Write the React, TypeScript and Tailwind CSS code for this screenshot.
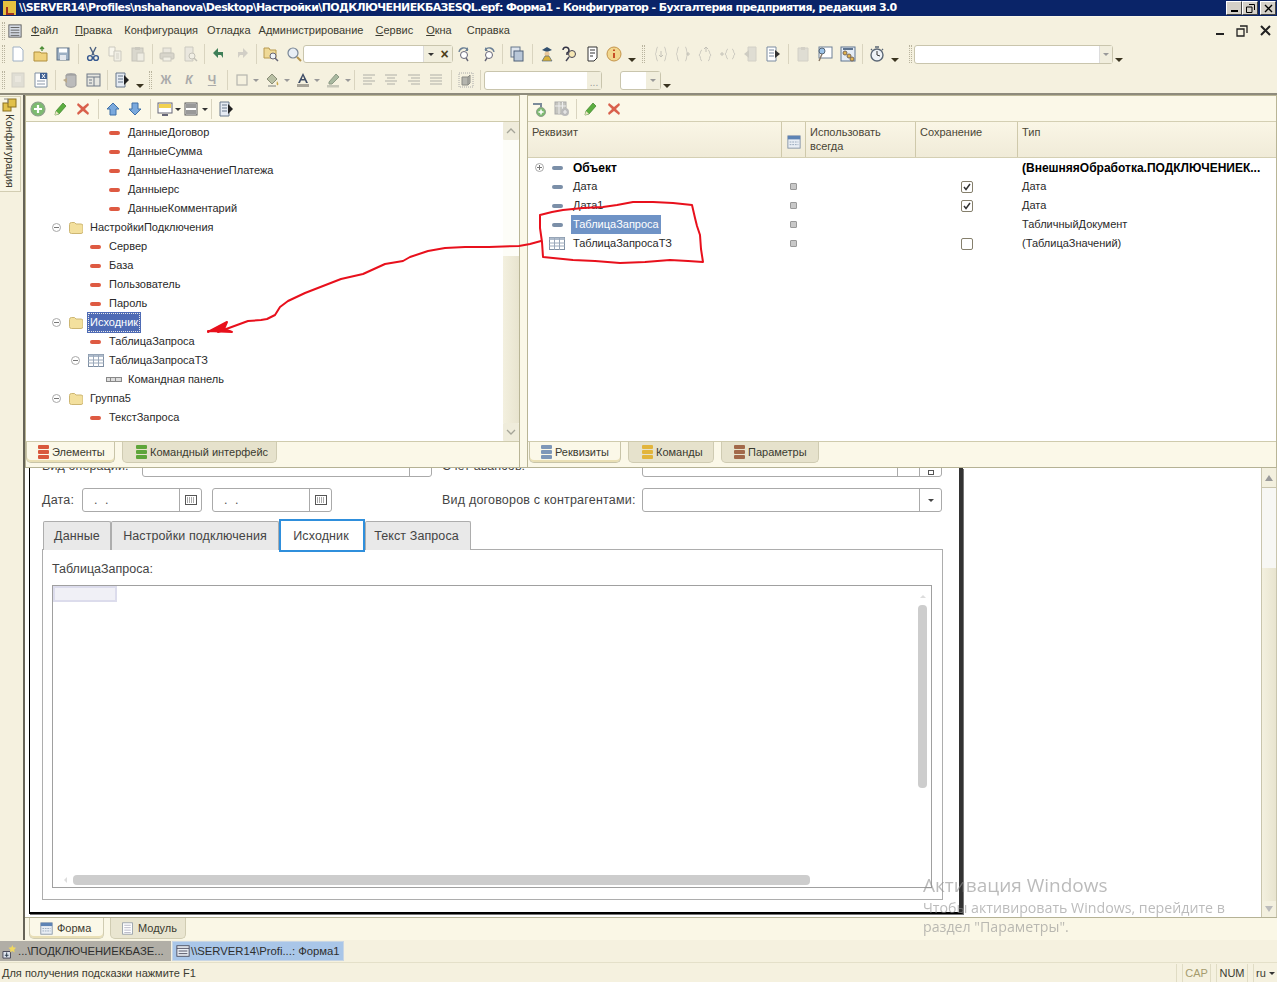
import type { ReactNode } from "react";

// small 16x16 drawings for the toolbars
function Ico({ children, dim, size = 16 }: { children: ReactNode; dim?: boolean; size?: number }) {
  return (
    <svg width={size} height={size} viewBox="0 0 16 16" className={dim ? "opacity-45 grayscale" : ""}>
      {children}
    </svg>
  );
}

const icons: Record<string, ReactNode> = {
  doc: <path d="M3 1h7l3 3v11H3z" fill="#fff" stroke="#9fb0c4" />,
  open: <><path d="M1 6h6l1 1h6v8H1z" fill="#efd27e" stroke="#b08f3e" /><path d="M9 5V2M7 3l2-2 2 2" fill="none" stroke="#4f8f3a" strokeWidth="1.3" /></>,
  save: <><rect x="2" y="2" width="12" height="12" fill="#9db0c4" stroke="#5f7186" /><rect x="4" y="2.5" width="8" height="4" fill="#fff" /><rect x="5" y="9" width="6" height="5" fill="#e4e8ee" /></>,
  cut: <><path d="M5 1l4 8M11 1L7 9" stroke="#4a5f80" strokeWidth="1.4" fill="none" /><circle cx="5" cy="12" r="2.4" fill="none" stroke="#34578f" strokeWidth="1.4" /><circle cx="11" cy="12" r="2.4" fill="none" stroke="#34578f" strokeWidth="1.4" /></>,
  copy: <><path d="M2 1h6v9H2z" fill="#fff" stroke="#999" /><path d="M7 5h7v10H7z" fill="#eee" stroke="#999" /><path d="M9 8h3M9 10h3M9 12h3" stroke="#aaa" /></>,
  paste: <><rect x="2" y="2" width="11" height="13" fill="#b9b9b0" stroke="#8d8d86" /><rect x="5" y="1" width="5" height="3" fill="#999" /><rect x="7" y="7" width="7" height="8" fill="#e9e9e9" stroke="#999" /></>,
  print: <><rect x="4" y="2" width="8" height="5" fill="#ddd" stroke="#999" /><rect x="1" y="7" width="14" height="6" rx="1" fill="#b5b5b0" stroke="#8d8d86" /><rect x="4" y="11" width="8" height="4" fill="#eee" stroke="#999" /></>,
  preview: <><path d="M3 1h8v14H3z" fill="#ddd" stroke="#999" /><circle cx="10" cy="10" r="3" fill="#eee" stroke="#888" /><path d="M12 12l3 3" stroke="#888" strokeWidth="1.5" /></>,
  undo: <path d="M7 2L2 7l5 5V9h3l2 3V6H7z" fill="#3f7f58" />,
  redo: <path d="M9 2l5 5-5 5V9H6l-2 3V6h5z" fill="#8fb09c" />,
  folderfind: <><path d="M1 2h5l1 2h6v8H1z" fill="#efd996" stroke="#b89a50" /><circle cx="10" cy="10" r="3" fill="#eef3f8" stroke="#667" /><path d="M12 12l3 3" stroke="#667" strokeWidth="1.5" /></>,
  search: <><circle cx="7" cy="7" r="5" fill="#e8eef5" stroke="#7a8797" strokeWidth="1.2" /><path d="M11 11l4 4" stroke="#b59550" strokeWidth="2" /></>,
  findn: <><path d="M2 6a5 5 0 0 1 9-2" fill="none" stroke="#6a7f95" strokeWidth="1.3" /><path d="M11 1v4H8" fill="#6a7f95" /><circle cx="7" cy="9" r="3.5" fill="#fff" stroke="#667" /><path d="M9 12l2 3" stroke="#667" strokeWidth="1.4" /></>,
  findp: <><path d="M14 6a5 5 0 0 0-9-2" fill="none" stroke="#6a7f95" strokeWidth="1.3" /><path d="M5 1v4h3" fill="#6a7f95" /><circle cx="9" cy="9" r="3.5" fill="#fff" stroke="#667" /><path d="M7 12l-2 3" stroke="#667" strokeWidth="1.4" /></>,
  windows: <><rect x="2" y="1" width="9" height="10" fill="#dfe5ec" stroke="#68788c" /><rect x="5" y="5" width="9" height="10" fill="#b9c7d8" stroke="#4f6078" /></>,
  wizard: <><path d="M3 4l5-3 5 3-5 2z" fill="#32506f" /><circle cx="8" cy="8" r="2.5" fill="#e9c89a" /><path d="M3 15l3-5h4l3 5z" fill="#d9b13a" stroke="#3e5a80" strokeWidth=".6" /></>,
  helpfind: <><path d="M2 4a3 3 0 1 1 4 3v2" fill="none" stroke="#334" strokeWidth="1.5" /><circle cx="11" cy="8" r="3.5" fill="#f6e7b4" stroke="#445" /><path d="M8 11l-3 4" stroke="#445" strokeWidth="1.4" /></>,
  notes: <><path d="M4 1h9v11l-3 3H4z" fill="#fff" stroke="#333" /><path d="M6 4h5M6 7h5M6 10h3" stroke="#333" /></>,
  info: <><circle cx="8" cy="8" r="7" fill="#f1d68d" stroke="#c4944a" /><path d="M8 3.5v1.5M8 7v5" stroke="#c2411c" strokeWidth="1.8" /></>,
  br1: <><path d="M5 1C3 1 4 7 2 8c2 1 1 7 3 7M11 1c2 0 1 6 3 7-2 1-1 7-3 7" fill="none" stroke="#999" /><path d="M8 5v6M6 9l2 2 2-2" fill="none" stroke="#888" /></>,
  br2: <><path d="M4 1C2 1 3 7 1 8c2 1 1 7 3 7M10 1c2 0 1 6 3 7-2 1-1 7-3 7" fill="none" stroke="#999" /><path d="M11 8h4M13 6v4" stroke="#888" /></>,
  br3: <><path d="M4 4C2 4 3 8 1 9c2 1 1 6 3 6M10 4c2 0 1 4 3 5-2 1-1 6-3 6" fill="none" stroke="#999" /><path d="M8 1v5M6 3l2-2 2 2" fill="none" stroke="#888" /></>,
  br4: <><path d="M8 3C6 3 7 7 5 8c2 1 1 5 3 5M12 3c2 0 1 4 3 5-2 1-1 5-3 5" fill="none" stroke="#999" /><path d="M0 8h4M2 6v4" stroke="#888" /></>,
  moveout: <><path d="M5 1h8v14H5z" fill="#c5c5bf" stroke="#aaa" /><path d="M1 8l5-4v8z" fill="#b39f75" /></>,
  docnext: <><path d="M2 1h9v14H2z" fill="#fff" stroke="#7b8ba0" /><path d="M4 4h5M4 7h5M4 10h5" stroke="#7b8ba0" /><path d="M10 4l5 4-5 4z" fill="#333" /></>,
  page: <><path d="M3 2h10v13H3z" fill="#c5c5bf" stroke="#aaa" /><path d="M6 1h4v3H6z" fill="#aaa" /></>,
  picfind: <><rect x="2" y="1" width="13" height="11" fill="#fff" stroke="#6e8096" /><circle cx="5" cy="5" r="3" fill="#9cc3e8" stroke="#567" /><path d="M2 15l3-7" stroke="#876" strokeWidth="1.4" /></>,
  chain: <><rect x="1" y="1" width="14" height="14" fill="#e6edf5" stroke="#5f7590" /><path d="M3 3h10" stroke="#5f7590" strokeWidth="2" /><circle cx="5" cy="7" r="2" fill="#e1b24b" stroke="#765" /><circle cx="9" cy="10" r="2" fill="#e1b24b" stroke="#765" /><circle cx="12" cy="13" r="2" fill="#e1b24b" stroke="#765" /></>,
  clock: <><circle cx="8" cy="9" r="6" fill="#eef2f6" stroke="#5b6775" strokeWidth="1.4" /><path d="M8 5v4l3 1" fill="none" stroke="#333" /><path d="M6 1h4M3 3l-1 1M13 3l1 1" stroke="#5b6775" strokeWidth="1.4" /></>,
  modgrey: <><rect x="2" y="1" width="12" height="14" fill="#c9c9c2" stroke="#aaa" /><rect x="5" y="4" width="6" height="6" fill="#ddd" /></>,
  formx: <><path d="M2 1h12v14H2z" fill="#fff" stroke="#7f8fa3" /><rect x="7" y="1" width="7" height="6" fill="#3e5f93" /><path d="M9 2l3 4M12 2L9 6" stroke="#fff" /><path d="M4 9h8M4 12h8" stroke="#8a97a8" /></>,
  cyl: <><ellipse cx="9" cy="3" rx="5" ry="2" fill="#aaa" /><path d="M4 3v10c0 3 10 3 10 0V3z" fill="#bbb" stroke="#999" /><path d="M1 8l4-2v5z" fill="#b9a98b" /></>,
  formview: <><rect x="2" y="2" width="13" height="12" fill="#e6e6e0" stroke="#707a88" /><path d="M2 5h13M9 5v9" stroke="#707a88" /><path d="M4 8h3M4 11h3" stroke="#707a88" /></>,
  docarrow: <><path d="M2 1h9v14H2z" fill="#e5ebf3" stroke="#68788c" /><path d="M4 4h5M4 7h5M4 10h5" stroke="#68788c" /><path d="M10 3l5 5-5 5z" fill="#222" /></>,
  border: <rect x="3" y="3" width="10" height="10" fill="none" stroke="#b5b5ae" strokeWidth="1.2" />,
  fill: <><path d="M3 7l5-5 5 5-5 5z" fill="#b9c0a4" stroke="#8a8e78" /><path d="M13 9c1 2 2 3 1 4s-2-1-1-4z" fill="#c9a94e" /><rect x="4" y="13" width="8" height="2" fill="#b8b8ae" /></>,
  fontA: <><path d="M8 1L3 11h2l1-2.5h4L11 11h2zM6.8 7L8 4l1.2 3z" fill="#3e4c66" /><rect x="2" y="12" width="12" height="3" fill="#a8a498" /></>,
  pen: <><path d="M4 10l7-8 3 3-7 7H4z" fill="#a9b9a0" stroke="#8d9a85" /><rect x="2" y="13" width="12" height="2.5" fill="#c7c7b8" /></>,
  al1: <path d="M2 3h12M2 6h9M2 9h12M2 12h9" stroke="#b0b0a8" strokeWidth="1.2" />,
  al2: <path d="M2 3h12M4 6h8M2 9h12M4 12h8" stroke="#b0b0a8" strokeWidth="1.2" />,
  al3: <path d="M2 3h12M5 6h9M2 9h12M5 12h9" stroke="#b0b0a8" strokeWidth="1.2" />,
  al4: <path d="M2 3h12M2 6h12M2 9h12M2 12h12" stroke="#b0b0a8" strokeWidth="1.2" />,
  box3d: <><rect x="1" y="1" width="14" height="14" fill="none" stroke="#aaa" strokeDasharray="1 1" /><path d="M4 5h6v8H4zM10 5l2-2v8l-2 2" fill="#b5b5ae" stroke="#8a8a84" /></>,
  plus: <><circle cx="8" cy="8" r="7" fill="#7dbb70" stroke="#8f9f8c" strokeWidth="1.2" /><path d="M8 4v8M4 8h8" stroke="#fff" strokeWidth="2.2" /></>,
  pencil: <><path d="M2 14l1-4 7-8 3 3-7 8z" fill="#5cae3f" stroke="#3c7f2a" strokeWidth=".7" /><path d="M2 14l1-4 3 3z" fill="#f0e6c8" /></>,
  del: <path d="M3 2l5 4 5-4 1 2-4 4 4 4-1 2-5-4-5 4-1-2 4-4-4-4z" fill="#d9604c" />,
  up: <path d="M8 2l6 6h-3v6H5V8H2z" fill="#7aa9dd" stroke="#3f70a8" />,
  down: <path d="M8 14l6-6h-3V2H5v6H2z" fill="#7aa9dd" stroke="#3f70a8" />,
  display: <><rect x="1" y="2" width="14" height="10" fill="#fff" stroke="#667" /><rect x="2" y="3" width="12" height="4" fill="#f2d24f" /><path d="M5 14h6" stroke="#667" strokeWidth="2" /></>,
  split: <><rect x="2" y="2" width="12" height="12" fill="#fff" stroke="#555" /><rect x="3" y="3" width="10" height="4" fill="#999" /><rect x="3" y="9" width="10" height="4" fill="#999" /></>,
  addattr: <><path d="M2 3h8v3" fill="none" stroke="#7b8b9a" strokeWidth="2" /><circle cx="10" cy="11" r="4.5" fill="#7dbb70" stroke="#8f9f8c" /><path d="M10 8.500v5M7.500 11h5" stroke="#fff" strokeWidth="1.5" /></>,
  addtable: <><rect x="1" y="1" width="11" height="12" fill="#c6c6c0" stroke="#aaa" /><path d="M1 5h11M5 1v12M8.500 1v12" stroke="#eee" /><circle cx="11" cy="11" r="4" fill="#bbb" /><path d="M11 9v4M9 11h4" stroke="#eee" strokeWidth="1.2" /></>,
};

function Btn({ name, dim }: { name: string; dim?: boolean }) {
  return (
    <div className="flex h-full w-[22.5px] shrink-0 items-center justify-center">
      <Ico dim={dim}>{icons[name]}</Ico>
    </div>
  );
}

function Sep() {
  return <div className="mx-[3px] h-[20px] w-px shrink-0 bg-[#d9d4bf]" />;
}

function Grip() {
  return <div className="ml-[2px] h-[18px] w-[3px] shrink-0 border-x border-dotted border-[#b9b49e]" />;
}

function Arrow({ dark }: { dark?: boolean }) {
  return (
    <div className={`h-0 w-0 shrink-0 border-x-[3px] border-t-[3px] border-x-transparent ${dark ? "border-t-[#333]" : "border-t-[#999]"}`} />
  );
}

function Overflow() {
  return <div className="mt-[12px] ml-[2px] h-0 w-0 shrink-0 border-x-[4px] border-t-[4px] border-x-transparent border-t-[#3a3420]" />;
}

function Bars({ color }: { color: "red" | "green" | "blue" | "yellow" | "brown" }) {
  const fill = { red: "bg-[#d9583c]", green: "bg-[#5ea53a]", blue: "bg-[#7e97b8]", yellow: "bg-[#e2b53c]", brown: "bg-[#a2694a]" }[color];
  return (
    <div className="flex w-[11px] shrink-0 flex-col gap-px">
      <div className={`h-[4px] rounded-[1px] ${fill}`} />
      <div className={`h-[4px] rounded-[1px] ${fill}`} />
      <div className={`h-[4px] rounded-[1px] ${fill}`} />
    </div>
  );
}

function Dash({ blue }: { blue?: boolean }) {
  return <div className={`h-[4px] w-[11px] rounded-[2px] ${blue ? "bg-[#7b8fa8]" : "bg-[#de5a42]"}`} />;
}

function Folder() {
  return (
    <svg width="14" height="12" viewBox="0 0 14 12">
      <path d="M.5 2.500q0-2 2-2h3l1.500 1.500h5q2 0 2 2v5.500q0 2-2 2h-9.500q-2 0-2-2z" fill="#f3e09e" stroke="#cdb672" />
    </svg>
  );
}

function TableIcon() {
  return (
    <svg width="16" height="13" viewBox="0 0 16 13">
      <rect x=".5" y=".5" width="15" height="12" fill="#fff" stroke="#7f8fa3" />
      <rect x=".5" y=".5" width="15" height="2.500" fill="#aebbcb" />
      <path d="M5.500 0v13M10.500 0v13M0 6h16M0 9h16" stroke="#9aa8ba" />
    </svg>
  );
}

function Expander({ plus }: { plus?: boolean }) {
  return (
    <div className="relative h-[9px] w-[9px] rounded-full border border-[#a9a9a9] bg-white">
      <div className="absolute top-[3px] left-[1px] h-px w-[5px] bg-[#777]" />
      {plus && <div className="absolute top-[1px] left-[3px] h-[5px] w-px bg-[#777]" />}
    </div>
  );
}

function TreeRow({ pad, exp, icon, box, label, sel }: { pad: string; exp?: boolean; icon: ReactNode; box: string; label: string; sel?: boolean }) {
  return (
    <div className={`flex h-[19px] items-center ${pad}`}>
      {exp && (
        <div className="w-[17px] shrink-0">
          <Expander />
        </div>
      )}
      <div className={`shrink-0 ${box}`}>{icon}</div>
      <span className={sel ? "-ml-[2px] border border-dotted border-[#e8e8e8] bg-[#4e6bb5] px-px text-white outline outline-[#4e6bb5]" : ""}>{label}</span>
    </div>
  );
}

function LeftTree() {
  return (
    <div className="flex-1 pt-px text-[11px] text-[#2a2a2a]">
      <TreeRow pad="pl-[83px]" icon={<Dash />} box="w-[19px]" label="ДанныеДоговор" />
      <TreeRow pad="pl-[83px]" icon={<Dash />} box="w-[19px]" label="ДанныеСумма" />
      <TreeRow pad="pl-[83px]" icon={<Dash />} box="w-[19px]" label="ДанныеНазначениеПлатежа" />
      <TreeRow pad="pl-[83px]" icon={<Dash />} box="w-[19px]" label="Данныерс" />
      <TreeRow pad="pl-[83px]" icon={<Dash />} box="w-[19px]" label="ДанныеКомментарий" />
      <TreeRow pad="pl-[26px]" exp icon={<Folder />} box="w-[21px]" label="НастройкиПодключения" />
      <TreeRow pad="pl-[64px]" icon={<Dash />} box="w-[19px]" label="Сервер" />
      <TreeRow pad="pl-[64px]" icon={<Dash />} box="w-[19px]" label="База" />
      <TreeRow pad="pl-[64px]" icon={<Dash />} box="w-[19px]" label="Пользователь" />
      <TreeRow pad="pl-[64px]" icon={<Dash />} box="w-[19px]" label="Пароль" />
      <TreeRow pad="pl-[26px]" exp icon={<Folder />} box="w-[21px]" label="Исходник" sel />
      <TreeRow pad="pl-[64px]" icon={<Dash />} box="w-[19px]" label="ТаблицаЗапроса" />
      <TreeRow pad="pl-[45px]" exp icon={<TableIcon />} box="w-[21px]" label="ТаблицаЗапросаТЗ" />
      <TreeRow
        pad="pl-[80px]"
        icon={
          <div className="flex h-[5px] w-[16px] gap-px border border-[#888] bg-[#ddd]">
            <div className="w-[4px] border-r border-[#888]" />
            <div className="w-[4px] border-r border-[#888]" />
          </div>
        }
        box="w-[22px]"
        label="Командная панель"
      />
      <TreeRow pad="pl-[26px]" exp icon={<Folder />} box="w-[21px]" label="Группа5" />
      <TreeRow pad="pl-[64px]" icon={<Dash />} box="w-[19px]" label="ТекстЗапроса" />
    </div>
  );
}

function PanelTab({ active, color, label, w, pad }: { active?: boolean; color: "red" | "green" | "blue" | "yellow" | "brown"; label: string; w: string; pad: string }) {
  return (
    <div
      className={`flex h-[21px] items-center gap-[3px] rounded-b-[5px] border border-t-0 text-[11px] text-[#3a3a30] ${w} ${pad} ${
        active ? "border-[#c8c4a8] bg-[#fbf8e8] shadow-[inset_0_-2px_0_#e9dfb5]" : "border-[#cfcbb2] bg-[#e6e2cc]"
      }`}
    >
      <Bars color={color} />
      <span className="whitespace-nowrap">{label}</span>
    </div>
  );
}

function ScrollLeft() {
  return (
    <div className="flex w-[16px] shrink-0 flex-col">
      <div className="flex h-[18px] items-center justify-center rounded-[1px] bg-[#efecdb] text-[#aaa]">
        <svg width="10" height="6" viewBox="0 0 10 6"><path d="M1 5l4-4 4 4" fill="none" stroke="#a5a598" strokeWidth="1.3" /></svg>
      </div>
      <div className="h-[116px] bg-[#fdfdf8]" />
      <div className="flex-1 bg-gradient-to-r from-[#f3f0df] to-[#e8e4cf]" />
      <div className="flex h-[18px] items-center justify-center rounded-[1px] bg-[#efecdb]">
        <svg width="10" height="6" viewBox="0 0 10 6"><path d="M1 1l4 4 4-4" fill="none" stroke="#a5a598" strokeWidth="1.3" /></svg>
      </div>
    </div>
  );
}

function Square() {
  return <div className="h-[7px] w-[7px] rounded-[1px] border border-[#999] bg-[#c8c8c8]" />;
}

function Check({ on }: { on?: boolean }) {
  return (
    <div className="flex h-[12px] w-[12px] items-center justify-center rounded-[2px] border border-[#857f6c] bg-white">
      {on && (
        <svg width="8" height="8" viewBox="0 0 8 8"><path d="M1 4l2 2.500L7 1" fill="none" stroke="#333" strokeWidth="1.5" /></svg>
      )}
    </div>
  );
}

function AttrRow({ name, icon, exp, bold, sel, save, type }: { name: string; icon: ReactNode; exp?: boolean; bold?: boolean; sel?: boolean; save?: "on" | "off"; type: string }) {
  return (
    <div className="grid h-[19px] grid-cols-[253px_24px_110px_102px_1fr] items-center">
      <div className="flex items-center pl-[7px]">
        <div className="flex w-[17px] shrink-0 items-center">{exp && <Expander plus />}</div>
        <div className="flex w-[21px] shrink-0 items-center">{icon}</div>
        <span className={`${bold ? "text-[12px] font-bold text-black" : ""} ${sel ? "-ml-[2px] bg-[#6f93c6] px-[2px] leading-[19px] text-white" : ""}`}>{name}</span>
      </div>
      <div className="flex justify-center">{!bold && <Square />}</div>
      <div />
      <div className="flex justify-center pl-[2px]">{save && <Check on={save === "on"} />}</div>
      <div className={`whitespace-nowrap pl-[5px] ${bold ? "text-[12px] font-bold text-black" : ""}`}>{type}</div>
    </div>
  );
}

function HeadCell({ children, border }: { children: ReactNode; border?: boolean }) {
  return (
    <div className={`h-full px-[4px] pt-[3px] leading-[14px] ${border ? "border-l border-[#cfc9ab]" : ""}`}>{children}</div>
  );
}

function FieldBtn({ children }: { children: ReactNode }) {
  return <div className="flex h-full w-[22px] shrink-0 items-center justify-center border-l border-[#aaa]">{children}</div>;
}

function Cal() {
  return (
    <svg width="12" height="10" viewBox="0 0 12 10">
      <rect x=".5" y=".5" width="11" height="9" fill="#fff" stroke="#555" />
      <path d="M2 3h8M2 5h8M2 7h8" stroke="#555" strokeDasharray="1 1" />
    </svg>
  );
}

function DownTri() {
  return <div className="h-0 w-0 border-x-[3px] border-t-[3px] border-x-transparent border-t-[#444]" />;
}

function FormTab({ label, w, active }: { label: string; w: string; active?: boolean }) {
  if (active) {
    return (
      <div className={`z-10 -my-[2px] flex h-[33px] items-center justify-center border-2 border-[#2f8fdc] bg-white pt-px pr-[2px] text-[12.5px] ${w}`}>
        {label}
      </div>
    );
  }
  return (
    <div className={`flex h-[29px] items-center justify-center rounded-t-[2px] border border-b-0 border-[#adadad] bg-[#e9e9e9] text-[12.5px] ${w}`}>
      {label}
    </div>
  );
}

function Form() {
  return (
    <div className="ml-[4px] h-[446px] w-[934px] overflow-hidden border-r-[4px] border-b-[2px] border-l border-r-[#333] border-b-black border-l-black bg-white pl-[12px] font-['Liberation_Sans',sans-serif] text-[#444] shadow-[1px_1px_0_#777]">
      {/* the row cut off by the upper panel */}
      <div className="h-[9px] overflow-hidden">
        <div className="-mt-[13px] flex h-[22px] text-[12.5px] tracking-[0.1px]">
          <span className="w-[100px] leading-[22px]">Вид операции:</span>
          <div className="flex h-[22px] w-[290px] justify-end rounded-[3px] border border-[#aaa]">
            <FieldBtn>{null}</FieldBtn>
          </div>
          <span className="ml-[10px] w-[200px] leading-[22px]">Счет авансов:</span>
          <div className="flex h-[22px] w-[300px] justify-end rounded-[3px] border border-[#aaa]">
            <FieldBtn>{null}</FieldBtn>
            <FieldBtn><div className="mt-[12px] h-[5px] w-[6px] border border-[#555]" /></FieldBtn>
          </div>
        </div>
      </div>
      <div className="mt-[11px] flex h-[24px] items-center text-[12.5px] tracking-[0.2px]">
        <span className="w-[40px]">Дата:</span>
        <div className="flex h-[24px] w-[120px] items-center justify-between rounded-[3px] border border-[#aaa]">
          <span className="pl-[11px] text-[#555]">.&nbsp;&nbsp;.</span>
          <FieldBtn><Cal /></FieldBtn>
        </div>
        <div className="ml-[10px] flex h-[24px] w-[120px] items-center justify-between rounded-[3px] border border-[#aaa]">
          <span className="pl-[11px] text-[#555]">.&nbsp;&nbsp;.</span>
          <FieldBtn><Cal /></FieldBtn>
        </div>
        <span className="ml-[110px] w-[200px] whitespace-nowrap">Вид договоров с контрагентами:</span>
        <div className="flex h-[24px] w-[300px] items-center justify-end rounded-[3px] border border-[#aaa]">
          <FieldBtn><DownTri /></FieldBtn>
        </div>
      </div>
      <div className="mt-[9px] flex h-[29px] w-[900px] items-start pl-px tracking-[0.1px]">
        <FormTab label="Данные" w="w-[68px]" />
        <FormTab label="Настройки подключения" w="w-[168px]" />
        <FormTab label="Исходник" w="w-[86px]" active />
        <div className="flex h-[29px] w-[106px] items-center justify-center rounded-t-[2px] border border-b-0 border-[#adadad] bg-[#e9e9e9] pr-[3px] text-[12.5px]">Текст Запроса</div>
      </div>
      <div className="-mt-px h-[351px] w-[901px] border border-[#adadad] px-[9px] pt-[12px]">
        <div className="text-[12.5px] leading-[15px]">ТаблицаЗапроса:</div>
        <div className="mt-[8px] flex h-[303px] w-[880px] flex-col border border-[#a0a0a0]">
          <div className="flex min-h-0 flex-1">
            <div className="flex-1">
              <div className="h-[16px] w-[64px] border-2 border-[#dcdcec] bg-[#f0f0f6]" />
            </div>
            <div className="flex w-[14px] flex-col items-center pt-[9px] pr-[3px]">
              <div className="h-0 w-0 border-x-[3px] border-b-[3px] border-x-transparent border-b-[#ddd]" />
              <div className="mt-[7px] h-[183px] w-[9px] rounded-[4px] bg-[#cdcdcd]" />
            </div>
          </div>
          <div className="flex h-[14px] items-center pl-[11px]">
            <div className="mr-[6px] h-0 w-0 border-y-[3px] border-r-[3px] border-y-transparent border-r-[#ddd]" />
            <div className="h-[10px] w-[737px] rounded-[4px] bg-[#cdcdcd]" />
          </div>
        </div>
      </div>
    </div>
  );
}

const menu = [
  { u: "Ф", t: "айл", m: "ml-[15px]" },
  { u: "П", t: "равка", m: "ml-[17px]" },
  { u: "", t: "Конфигурация", m: "ml-[12px]" },
  { u: "", t: "Отладка", m: "ml-[9px]" },
  { u: "", t: "Администрирование", m: "ml-[8px]" },
  { u: "С", t: "ервис", m: "ml-[12px]" },
  { u: "О", t: "кна", m: "ml-[13px]" },
  { u: "", t: "Справка", m: "ml-[15px]" },
];

function WinBtn({ children }: { children: ReactNode }) {
  return (
    <div className="flex h-[14px] w-[16px] items-center justify-center border border-t-white border-r-[#444] border-b-[#444] border-l-white bg-[#d4d0c8] text-black">
      {children}
    </div>
  );
}

export default function App() {
  return (
    <div className="relative flex h-[982px] w-[1277px] flex-col overflow-hidden bg-[#f5f1df] font-['Liberation_Sans',sans-serif] text-[11px] text-[#3b3b30]">
      {/* title */}
      <div className="flex h-[16px] shrink-0 items-center bg-[#0a2468] text-white">
        <div className="ml-[3px] mr-[3px] flex h-[14px] w-[13px] items-end justify-center bg-[#e5c040]">
          <div className="h-[8px] w-[8px] border-b-2 border-l-2 border-[#a0301f]" />
        </div>
        <span className="pt-px font-['DejaVu_Sans',sans-serif] text-[11px] font-bold tracking-[-0.62px] whitespace-nowrap">
          \\SERVER14\Profiles\nshahanova\Desktop\Настройки\ПОДКЛЮЧЕНИЕКБАЗЕSQL.epf: Форма1 - Конфигуратор - Бухгалтерия предприятия, редакция 3.0
        </span>
        <div className="ml-auto flex">
          <WinBtn><div className="mt-[6px] h-[2px] w-[7px] bg-black" /></WinBtn>
          <WinBtn><svg width="9" height="9" viewBox="0 0 9 9"><path d="M3 .5h5.500V6M.5 3h5.500v5.500H.5z" fill="none" stroke="#000" /></svg></WinBtn>
          <div className="w-[2px]" />
          <WinBtn><svg width="9" height="9" viewBox="0 0 9 9"><path d="M1 1l7 7M8 1L1 8" stroke="#000" strokeWidth="1.4" /></svg></WinBtn>
          <div className="w-px" />
        </div>
      </div>

      {/* menu */}
      <div className="flex h-[25px] shrink-0 items-center border-t border-[#fbf8ea] pt-[3px]">
        <Grip />
        <div className="ml-[3px] mr-[-6px] w-[14px]">
          <Ico size={14}><rect x="1" y="1" width="14" height="14" fill="#d5dbe5" stroke="#555" /><path d="M3 4h10M3 7h10M3 10h10M3 13h10" stroke="#555" /></Ico>
        </div>
        {menu.map((item) => (
          <span key={item.t} className={`${item.m} whitespace-nowrap`}>
            <span className="underline">{item.u}</span>
            {item.t}
          </span>
        ))}
        <div className="ml-auto mr-[6px] flex items-center gap-[12px] text-[#222]">
          <div className="mt-[7px] h-[2px] w-[8px] bg-[#222]" />
          <svg width="12" height="12" viewBox="0 0 12 12"><path d="M4 1h7v7M1 4h7v7H1z" fill="none" stroke="#222" strokeWidth="1.3" /></svg>
          <svg width="11" height="11" viewBox="0 0 11 11"><path d="M1 1l9 9M10 1l-9 9" stroke="#222" strokeWidth="2" /></svg>
        </div>
      </div>

      {/* toolbar 1 */}
      <div className="flex h-[26px] shrink-0 items-center">
        <Grip />
        <div className="w-[2px] shrink-0" />
        <Btn name="doc" /><Btn name="open" /><Btn name="save" /><Sep />
        <Btn name="cut" /><Btn name="copy" dim /><Btn name="paste" dim /><Sep />
        <Btn name="print" dim /><Btn name="preview" dim /><Sep />
        <Btn name="undo" /><Btn name="redo" dim /><Sep />
        <Btn name="folderfind" /><Btn name="search" />
        <div className="-ml-[2px] flex h-[18px] w-[150px] shrink-0 items-center rounded-[3px] border border-[#c9c5ad] bg-white">
          <div className="ml-auto flex h-full w-[14px] items-center justify-center border-l border-[#ddd] bg-[#f1eedd]"><Arrow dark /></div>
          <div className="flex h-full w-[15px] items-center justify-center bg-[#f1eedd] text-[14px] font-bold leading-none text-[#4a3d1a]">×</div>
        </div>
        <div className="w-[1px] shrink-0" />
        <Btn name="findn" /><Btn name="findp" /><Sep />
        <Btn name="windows" /><Sep />
        <Btn name="wizard" /><Btn name="helpfind" /><Btn name="notes" /><Btn name="info" />
        <Overflow />
        <div className="w-[4px] shrink-0" />
        <Grip />
        <div className="w-[5px] shrink-0" />
        <Btn name="br1" dim /><Btn name="br2" dim /><Btn name="br3" dim /><Btn name="br4" dim /><Btn name="moveout" dim /><Btn name="docnext" /><Sep />
        <Btn name="page" dim /><Btn name="picfind" /><Btn name="chain" /><Sep />
        <Btn name="clock" />
        <Overflow />
        <div className="w-[8px] shrink-0" />
        <Grip />
        <div className="ml-[2px] flex h-[19px] w-[199px] shrink-0 items-center justify-end rounded-[3px] border border-[#c9c5ad] bg-white">
          <div className="flex h-full w-[13px] items-center justify-center border-l border-[#ddd] bg-[#f1eedd]"><Arrow /></div>
        </div>
        <Overflow />
      </div>

      {/* toolbar 2 */}
      <div className="flex h-[26px] shrink-0 items-center">
        <Grip />
        <div className="w-[2px] shrink-0" />
        <Btn name="modgrey" dim /><Btn name="formx" /><Sep />
        <Btn name="cyl" /><Btn name="formview" /><Sep />
        <Btn name="docarrow" />
        <Overflow />
        <div className="w-[3px] shrink-0" />
        <Grip />
        <div className="w-[3px] shrink-0" />
        {["Ж", "К", "Ч"].map((l, i) => (
          <div key={l} className={`flex w-[23px] shrink-0 justify-center text-[12px] font-bold text-[#aaa] ${i === 1 ? "italic" : ""} ${i === 2 ? "underline" : ""}`}>
            {l}
          </div>
        ))}
        <Sep />
        <Btn name="border" /><Arrow /><div className="w-[2px] shrink-0" />
        <Btn name="fill" /><Arrow /><div className="w-[2px] shrink-0" />
        <Btn name="fontA" /><Arrow /><div className="w-[2px] shrink-0" />
        <Btn name="pen" /><Arrow />
        <Sep />
        <Btn name="al1" /><Btn name="al2" /><Btn name="al3" /><Btn name="al4" /><Sep />
        <Btn name="box3d" /><Sep />
        <div className="flex h-[19px] w-[118px] shrink-0 items-center justify-end rounded-[3px] border border-[#c9c5ad] bg-white">
          <div className="flex h-full w-[14px] items-end justify-center bg-[#f1eedd] text-[10px] leading-[13px] text-[#999]">...</div>
        </div>
        <div className="ml-[18px] flex h-[19px] w-[41px] shrink-0 items-center justify-end rounded-[3px] border border-[#c9c5ad] bg-white">
          <div className="flex h-full w-[14px] items-center justify-center bg-[#f1eedd]"><Arrow /></div>
        </div>
        <Overflow />
      </div>

      <div className="h-[2px] shrink-0 bg-[#8e8b7c]" />

      {/* main */}
      <div className="flex min-h-0 flex-1">
        <div className="w-[23px] shrink-0 pt-[1px]">
          <div className="flex h-[96px] w-[21px] flex-col items-center border border-l-0 border-[#d2cdb2] bg-[#f8f5e4]">
            <Ico size={16}><rect x="1" y="6" width="8" height="8" fill="#e2c14a" stroke="#8a7020" /><rect x="6" y="2" width="8" height="8" fill="#e2c14a" stroke="#8a7020" /><path d="M2 2h4v4" fill="none" stroke="#888" /></Ico>
            <span className="mt-[1px] leading-[16px] [writing-mode:vertical-rl]">Конфигурация</span>
          </div>
        </div>

        <div className="flex min-w-0 flex-1 flex-col border-l-2 border-[#666357]">
          {/* upper panels */}
          <div className="flex h-[373px] shrink-0 border-b border-[#b5b295] bg-[#fbf8e8]">
            {/* left panel */}
            <div className="flex w-[495px] shrink-0 flex-col border-x border-[#b9b596]">
              <div className="flex h-[26px] shrink-0 items-center border-t border-[#b9b596] pl-[1px] pt-px">
                <Btn name="plus" /><Btn name="pencil" /><Btn name="del" /><Sep />
                <Btn name="up" /><Btn name="down" /><Sep />
                <Btn name="display" /><div className="-ml-[1px]"><Arrow dark /></div>
                <div className="-ml-[1px]"><Btn name="split" /></div><div className="-ml-[1px]"><Arrow dark /></div>
                <Sep />
                <Btn name="docarrow" />
              </div>
              <div className="flex h-[321px] shrink-0 border-y border-[#cfcbad] bg-white">
                <LeftTree />
                <ScrollLeft />
              </div>
              <div className="flex gap-[7px]">
                <PanelTab active color="red" label="Элементы" w="w-[89px]" pad="pl-[11px]" />
                <PanelTab color="green" label="Командный интерфейс" w="w-[155px]" pad="pl-[13px]" />
              </div>
            </div>

            <div className="w-[7px] shrink-0" />

            {/* right panel */}
            <div className="flex min-w-0 flex-1 flex-col border-x border-[#b9b596]">
              <div className="flex h-[26px] shrink-0 items-center border-t border-[#b9b596] pt-px">
                <Btn name="addattr" /><Btn name="addtable" /><Sep /><Btn name="pencil" /><Btn name="del" />
              </div>
              <div className="grid h-[37px] shrink-0 grid-cols-[253px_24px_110px_102px_1fr] border-y border-[#d4cfb3] bg-gradient-to-b from-[#faf6e6] to-[#f0ebd8] leading-[14px] text-[#4a4636]">
                <HeadCell>Реквизит</HeadCell>
                <div className="flex h-full items-center justify-center border-l border-[#cfc9ab] pt-[5px]">
                  <Ico size={14}><rect x="1" y="1" width="14" height="14" fill="#e9eef4" stroke="#7f8fa3" /><rect x="1" y="1" width="14" height="4" fill="#5d83b4" /><path d="M3 8h10M3 11h10" stroke="#8ea0b5" strokeDasharray="2 1" /></Ico>
                </div>
                <HeadCell border>Использовать<br />всегда</HeadCell>
                <HeadCell border>Сохранение</HeadCell>
                <HeadCell border>Тип</HeadCell>
              </div>
              <div className="min-h-0 flex-1 bg-white text-[#2a2a2a]">
                <AttrRow name="Объект" exp bold icon={<Dash blue />} type="(ВнешняяОбработка.ПОДКЛЮЧЕНИЕК..." />
                <AttrRow name="Дата" icon={<Dash blue />} save="on" type="Дата" />
                <AttrRow name="Дата1" icon={<Dash blue />} save="on" type="Дата" />
                <AttrRow name="ТаблицаЗапроса" sel icon={<Dash blue />} type="ТабличныйДокумент" />
                <AttrRow name="ТаблицаЗапросаТЗ" icon={<div className="-ml-[3px]"><TableIcon /></div>} save="off" type="(ТаблицаЗначений)" />
              </div>
              <div className="flex h-[26px] shrink-0 items-start gap-[7px] border-t border-[#cfcbad] pl-[1px]">
                <PanelTab active color="blue" label="Реквизиты" w="w-[92px]" pad="pl-[11px]" />
                <PanelTab color="yellow" label="Команды" w="w-[86px]" pad="pl-[13px]" />
                <PanelTab color="brown" label="Параметры" w="w-[98px]" pad="pl-[12px]" />
              </div>
            </div>
          </div>

          {/* form designer */}
          <div className="flex h-[450px] shrink-0 border-b border-[#b5b295] bg-white">
            <div className="min-w-0 flex-1">
              <Form />
            </div>
            <div className="flex w-[16px] shrink-0 flex-col border-x border-[#c9c5ad]">
              <div className="flex h-[20px] items-center justify-center border-b border-[#c9c5ad] bg-[#f3f0df]">
                <div className="h-0 w-0 border-x-[4px] border-b-[6px] border-x-transparent border-b-[#9a9a9a]" />
              </div>
              <div className="h-[80px] bg-[#f7f7f4]" />
              <div className="flex-1 bg-gradient-to-r from-[#f3f0df] to-[#e8e4cf]" />
              <div className="flex h-[16px] items-center justify-center bg-[#f3f0df]">
                <div className="h-0 w-0 border-x-[4px] border-t-[6px] border-x-transparent border-t-[#bbb]" />
              </div>
            </div>
          </div>

          <div className="flex h-[22px] shrink-0 gap-[6px] bg-[#faf7e6] pl-[4px]">
            <div className="flex h-[21px] w-[75px] items-center gap-[4px] rounded-b-[5px] border border-t-0 border-[#d0ccb2] bg-[#fbf8e8] pl-[10px] shadow-[inset_0_-2px_0_#e9dfb5]">
              <Ico size={13}><rect x="1" y="1" width="14" height="14" fill="#e9eef4" stroke="#7f8fa3" /><rect x="1" y="1" width="14" height="4" fill="#5d83b4" /><path d="M3 8h10M3 11h10" stroke="#8ea0b5" strokeDasharray="2 1" /></Ico>
              <span>Форма</span>
            </div>
            <div className="flex h-[21px] w-[76px] items-center gap-[4px] rounded-b-[5px] border border-t-0 border-[#d0ccb2] bg-[#e9e5d0] pl-[10px]">
              <Ico size={13}><rect x="2" y="1" width="12" height="14" fill="#fff" stroke="#8c96a3" /><path d="M4 4h8M4 7h8M4 10h8M4 13h8" stroke="#aab" /></Ico>
              <span>Модуль</span>
            </div>
          </div>
        </div>
      </div>

      {/* open windows */}
      <div className="flex h-[23px] shrink-0 items-center gap-[1px] border-b border-[#e4e0c9]">
        <div className="flex h-[20px] w-[171px] items-center bg-[#b1aea6] pl-[2px] text-[11.3px] text-[#2e2e2e]">
          <Ico size={15}><path d="M1 8h8v7H1z" fill="#dfe5ee" stroke="#445" /><path d="M5 9v5M3 12h4" stroke="#234" /><path d="M11 1l1 2.500L15 4l-2 2 .5 3-2.500-1.500L8.500 9 9 6 7 4l3-.5z" fill="#f0d860" /></Ico>
          <span className="ml-px whitespace-nowrap">...\ПОДКЛЮЧЕНИЕКБАЗЕ...</span>
        </div>
        <div className="flex h-[20px] w-[172px] items-center border border-[#c9d6e4] bg-[#a9c6e8] pl-[3px] text-[11.3px] text-[#2e2e2e]">
          <Ico size={14}><rect x="1" y="2" width="14" height="12" fill="#e9eef4" stroke="#445" /><path d="M1 5h14M3 8h10M3 11h10" stroke="#445" /></Ico>
          <span className="ml-[1px] whitespace-nowrap">\\SERVER14\Profi...: Форма1</span>
        </div>
      </div>

      {/* status bar */}
      <div className="flex h-[19px] shrink-0 items-center pt-px">
        <div className="flex h-full w-[1177px] items-center border-r border-[#e0dcc4] pl-[2px]">Для получения подсказки нажмите F1</div>
        <div className="ml-[5px] flex h-full w-[29px] items-center justify-center border-x border-[#e0dcc4] text-[#a59c6e]">CAP</div>
        <div className="ml-[5px] flex h-full w-[32px] items-center justify-center border-x border-[#e0dcc4]">NUM</div>
        <div className="ml-[5px] flex h-full w-[24px] items-center justify-center gap-[3px] border-l border-[#e0dcc4]">ru<Arrow dark /></div>
      </div>

      {/* pen marks drawn over the screenshot */}
      <svg className="pointer-events-none absolute inset-0" width="1277" height="982" viewBox="0 0 1277 982" fill="none" stroke="#e8101c" strokeWidth="2" strokeLinejoin="round" strokeLinecap="round">
        <path d="M540 215l12-3 11-2 20-2 20-1 14-2 16-3 20 0 20 1 19 2 3 13 2 8 3 9 1 14 2 13-15-1-18-1-25 2-25 1-25-2-22-1-30-3-1-15-2-14z" />
        <path d="M541 241l-11 3-11 2-30 1-24 0-20 1-17 3-18 6-7 4-18 3-22 10-22 5-18 7-18 7-17 8-8 6-5 8-8 4-6 1-13 1-30 11" />
        <path d="M208 332l19-10-3 7 8 3-24-1z" fill="#e8101c" />
      </svg>

      {/* Windows activation notice */}
      <div className="pointer-events-none absolute top-[872px] left-[923px] font-['Open_Sans',sans-serif] text-[#8f8f8f] opacity-60">
        <div className="text-[19px] leading-[26px]">Активация Windows</div>
        <div className="text-[14.2px] leading-[19px]">
          Чтобы активировать Windows, перейдите в<br />раздел "Параметры".
        </div>
      </div>
    </div>
  );
}
